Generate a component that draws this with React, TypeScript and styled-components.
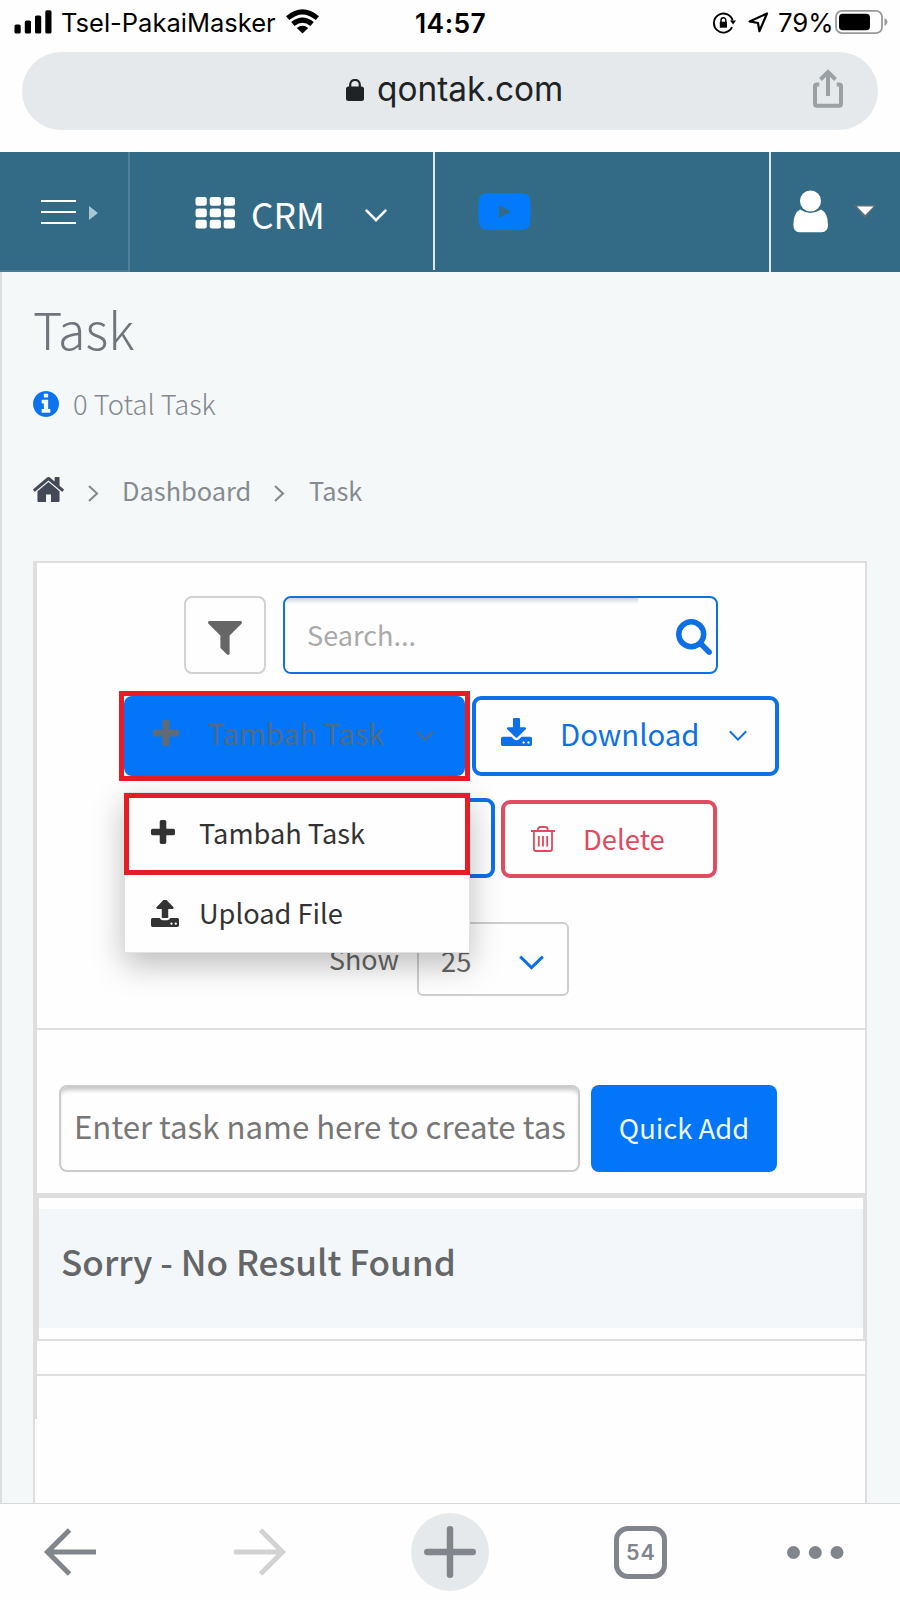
import React from "react";
import styled, { createGlobalStyle } from "styled-components";

const sans = '"Noto Sans CJK SC", "Open Sans", sans-serif';
const system = 'Inter, "Liberation Sans", sans-serif';
const blue = "#0275f8";
const outlineBlue = "#0e70e6";
const rule = "#dedede";
const red = "#e81c25";

const GlobalStyle = createGlobalStyle`
  * { box-sizing: border-box; }
  body { margin: 0; background: #fff; }
  svg { display: block; flex: none; }
  button, input { font: inherit; margin: 0; padding: 0; }
`;

const Screen = styled.div`
  width: 900px;
  height: 1600px;
  display: flex;
  flex-direction: column;
  overflow: hidden;
  background: #fefefe;
  font-family: ${sans};
`;

const Text = styled.span`
  display: block;
  line-height: 1;
  white-space: nowrap;
`;

/* ---------- status bar ---------- */
const StatusBar = styled.header`
  height: 52px;
  display: flex;
  align-items: flex-start;
  flex: none;
  color: #000;
  font-family: ${system};
`;
const SignalIcon = styled.svg`
  margin: 10px 0 0 14px;
`;
const Carrier = styled(Text)`
  width: 213px;
  margin: 10px 0 0 9px;
  font-size: 25.5px;
`;
const WifiIcon = styled.svg`
  margin: 9px 0 0 12px;
`;
const Clock = styled(Text)`
  width: 74px;
  margin: 10px 0 0 96px;
  font-size: 26.4px;
  font-weight: 600;
  letter-spacing: 0.45px;
`;
const LockRotateIcon = styled.svg`
  margin: 12px 0 0 224px;
`;
const LocationIcon = styled.svg`
  margin: 12px 0 0 12px;
`;
const BatteryText = styled(Text)`
  width: 55px;
  margin: 10px 0 0 9px;
  font-size: 25.8px;
`;
const BatteryIcon = styled.svg`
  margin: 9px 0 0 2px;
`;

/* ---------- address bar ---------- */
const AddressRow = styled.div`
  height: 100px;
  flex: none;
  padding: 0 22px;
`;
const AddressBar = styled.div`
  height: 78px;
  border-radius: 39px;
  background: #e5e9eb;
  display: flex;
  align-items: flex-start;
`;
const LockIcon = styled.svg`
  margin: 27px 0 0 324px;
`;
const Address = styled(Text)`
  width: 187px;
  margin: 21px 0 0 13px;
  color: #202326;
  font-family: ${system};
  font-size: 33.4px;
`;
const ShareIcon = styled.svg`
  margin: 17px 0 0 245px;
`;

/* ---------- navigation ---------- */
const Nav = styled.nav`
  height: 120px;
  flex: none;
  display: flex;
  background: #336b87;
  color: #fff;
`;
const NavToggle = styled.div`
  width: 130px;
  display: flex;
  align-items: flex-start;
  border-right: 2px solid #4f8198;
  border-bottom: 2px solid #4a7d94;
  padding: 48px 0 0 41px;
  gap: 12px;
`;
const ToggleArrow = styled.svg`
  margin-top: 6px;
`;
const NavProduct = styled.div`
  width: 305px;
  height: 118px;
  display: flex;
  align-items: flex-start;
  border-right: 2px solid #dbe7ec;
  padding-left: 65px;
`;
const GridIcon = styled.svg`
  margin-top: 45px;
`;
const ProductName = styled(Text)`
  width: 74px;
  margin: 44px 0 0 16px;
  font-size: 35.4px;
`;
const ProductChevron = styled.svg`
  margin: 57px 0 0 40px;
`;
const NavVideo = styled.div`
  width: 336px;
  border-right: 2px solid #dbe7ec;
  padding: 41px 0 0 43px;
`;
const NavAccount = styled.div`
  flex: 1;
  display: flex;
  align-items: flex-start;
  padding: 38px 0 0 22px;
`;
const AccountCaret = styled.svg`
  margin: 14px 0 0 24px;
`;

/* ---------- page heading ---------- */
const Page = styled.main`
  flex: 1;
  min-height: 0;
  border-left: 2px solid ${rule};
  background: #f4f8f9;
  padding-left: 31px;
  overflow: hidden;
`;
const PageHead = styled.div`
  height: 289px;
  display: flex;
  flex-direction: column;
  align-items: flex-start;
`;
const Title = styled.h1`
  margin: 31px 0 0;
  color: #6f757b;
  font-size: 50.2px;
  font-weight: 300;
  line-height: 1;
`;
const Summary = styled.div`
  display: flex;
  align-items: flex-start;
  margin-top: 37px;
`;
const InfoIcon = styled.svg`
  margin-top: 1px;
  color: #0c72ee;
`;
const SummaryText = styled(Text)`
  margin-left: 14px;
  color: #84898e;
  font-size: 27.3px;
  font-weight: 300;
`;
const Crumbs = styled.div`
  display: flex;
  align-items: flex-start;
  margin-top: 59px;
  color: #868b90;
  font-size: 25.4px;
`;
const HomeIcon = styled.svg`
  color: #444957;
`;
const CrumbArrow = styled.svg<{ $left: number }>`
  margin: 8px 0 0 ${(p) => p.$left}px;
`;
const Crumb = styled(Text)<{ $width: number; $left: number }>`
  width: ${(p) => p.$width}px;
  margin: 1px 0 0 ${(p) => p.$left}px;
`;

/* ---------- panel ---------- */
const Panel = styled.section`
  width: 834px;
  height: 960px;
  border: 2px solid ${rule};
  background: #fefefe;
`;
const PanelBody = styled.div`
  position: relative;
  height: 856px;
  border-left: 2px solid ${rule};
`;
const Toolbar = styled.div`
  height: 467px;
  padding-top: 33px;
  border-bottom: 2px solid ${rule};
`;
const SearchRow = styled.div`
  display: flex;
  gap: 17px;
  margin-left: 147px;
`;
const FilterButton = styled.button`
  width: 82px;
  height: 78px;
  display: flex;
  justify-content: center;
  padding-top: 23px;
  border: 2px solid #d2d2d2;
  border-radius: 8px;
  background: #fefefe;
  color: #666;
`;
const SearchBox = styled.div`
  width: 435px;
  height: 78px;
  display: flex;
  align-items: flex-start;
  overflow: hidden;
  border: 2px solid ${outlineBlue};
  border-radius: 8px;
`;
const SearchField = styled.div`
  width: 353px;
  height: 74px;
  padding: 23px 0 0 22px;
  border-top-left-radius: 6px;
  background: linear-gradient(#cfd4e0, #fefefe 6px);
  color: #aaa;
  font-size: 27.1px;
`;
const SearchIcon = styled.svg`
  margin: 21px 0 0 38px;
  color: ${outlineBlue};
`;
const ActionRow = styled.div`
  display: flex;
  align-items: flex-start;
  gap: 2px;
  margin: 17px 0 0 82px;
`;
const Highlight = styled.div`
  width: 351px;
  height: 90px;
  border: 5px solid ${red};
`;
const AddButton = styled.button`
  width: 341px;
  height: 80px;
  display: flex;
  align-items: flex-start;
  border: 0;
  border-radius: 8px;
  background: ${blue};
  color: #516b85;
  padding: 22px 0 0 29px;
  font-size: 28.9px;
`;
const AddIcon = styled.svg`
  margin-top: 2px;
  color: #5f6c78;
`;
const AddText = styled(Text)`
  width: 178px;
  margin: 0 0 0 28px;
`;
const AddChevron = styled.svg`
  margin: 12px 0 0 31px;
`;
const DownloadButton = styled.button`
  width: 307px;
  height: 80px;
  margin-top: 5px;
  display: flex;
  align-items: flex-start;
  border: 4px solid ${outlineBlue};
  border-radius: 9px;
  background: #fefefe;
  color: ${outlineBlue};
  padding: 18px 0 0 25px;
  font-size: 29.3px;
`;
const DownloadText = styled(Text)`
  width: 138px;
  margin: 1px 0 0 28px;
`;
const DownloadChevron = styled.svg`
  margin: 12px 0 0 31px;
`;
const BulkRow = styled.div`
  display: flex;
  align-items: flex-start;
  gap: 6px;
  margin: 17px 0 0 87px;
`;
const BulkButton = styled.button`
  width: 371px;
  height: 80px;
  border: 4px solid ${outlineBlue};
  border-radius: 9px;
  background: #fefefe;
`;
const DeleteButton = styled.button`
  width: 216px;
  height: 78px;
  margin-top: 2px;
  display: flex;
  align-items: flex-start;
  border: 4px solid #e04c60;
  border-radius: 9px;
  background: #fefefe;
  color: #de4a5e;
  padding: 20px 0 0 26px;
  font-size: 27.4px;
`;
const TrashIcon = styled.svg`
  margin-top: 2px;
`;
const DeleteText = styled(Text)`
  margin: 1px 0 0 28px;
`;
const PageSizeRow = styled.div`
  display: flex;
  align-items: flex-start;
  margin: 44px 0 0 292px;
  color: #666;
`;
const ShowText = styled(Text)`
  width: 71px;
  margin-top: 24px;
  font-size: 26.9px;
`;
const PageSize = styled.div`
  width: 152px;
  height: 74px;
  margin-left: 17px;
  display: flex;
  align-items: flex-start;
  border: 2px solid #cecece;
  border-radius: 6px;
  padding: 23px 0 0 22px;
  font-size: 27.3px;
`;
const SizeChevron = styled.svg`
  margin: 8px 0 0 48px;
  color: ${outlineBlue};
`;

const Menu = styled.div`
  position: absolute;
  left: 87px;
  top: 229px;
  width: 346px;
  height: 161px;
  border: 1px solid #e2e2e2;
  background: #fefefe;
  box-shadow: 0 12px 30px rgba(0, 0, 0, 0.26);
  color: #333;
`;
const MenuItem = styled.div<{ $marked?: boolean }>`
  width: 346px;
  height: ${(p) => (p.$marked ? 82 : 74)}px;
  margin-left: -1px;
  display: flex;
  align-items: flex-start;
  border: ${(p) => (p.$marked ? `5px solid ${red}` : "0")};
  padding: ${(p) => (p.$marked ? "20px 0 0 22px" : "23px 0 0 27px")};
  font-size: 27.2px;
`;
const MenuIcon = styled.svg`
  margin-top: 2px;
`;
const MenuText = styled(Text)<{ $left: number }>`
  margin: 1px 0 0 ${(p) => p.$left}px;
`;

const QuickAdd = styled.form`
  height: 163px;
  display: flex;
  align-items: flex-start;
  gap: 11px;
  padding: 55px 0 0 22px;
`;
const TaskInput = styled.input`
  width: 521px;
  height: 87px;
  padding: 0 6px 6px 13px;
  border: 2px solid #cbcbcb;
  border-radius: 8px;
  outline: 0;
  background: #fefefe;
  box-shadow: inset 0 5px 4px -2px #c4c4c4;
  font-size: 31.2px;
  &::placeholder { color: #777; opacity: 1; }
`;
const QuickButton = styled.button`
  width: 186px;
  height: 87px;
  padding-bottom: 3px;
  border: 0;
  border-radius: 8px;
  background: ${blue};
  color: #eff8ff;
  font-size: 27.4px;
`;
const Results = styled.div`
  height: 148px;
  margin-left: -1px;
  border-style: solid;
  border-color: ${rule};
  border-width: 5px 2px 2px 3px;
  padding: 11px 0;
`;
const EmptyMessage = styled.div`
  height: 119px;
  background: #f3f7fa;
  padding: 34px 0 0 22px;
  color: #646668;
  font-size: 35.1px;
  font-weight: 500;
`;
const TableFoot = styled.div`
  height: 35px;
  border-bottom: 2px solid ${rule};
`;

/* ---------- browser toolbar ---------- */
const BottomBar = styled.footer`
  height: 97px;
  flex: none;
  display: flex;
  align-items: center;
  border-top: 1px solid #d8d8d8;
  background: #fefefe;
  color: #80868b;
  padding: 0 0 0 43px;
`;
const ForwardIcon = styled.svg`
  margin-left: 138px;
  color: #d2d2d2;
`;
const NewTab = styled.div`
  width: 78px;
  height: 78px;
  margin-left: 124px;
  display: flex;
  align-items: center;
  justify-content: center;
  border-radius: 50%;
  background: #e6e9ec;
`;
const TabCount = styled.div`
  width: 53px;
  height: 53px;
  margin-left: 125px;
  display: flex;
  align-items: center;
  justify-content: center;
  border: 5px solid #80868b;
  border-radius: 14px;
  font: 600 21.5px/1 ${system};
  letter-spacing: 1px;
  padding: 1px 0 0 1px;
`;
const MoreIcon = styled.svg`
  margin-left: 120px;
`;

const plusPath =
  "M1600 736v192q0 40-28 68t-68 28h-416v416q0 40-28 68t-68 28h-192q-40 0-68-28t-28-68v-416h-416q-40 0-68-28t-28-68v-192q0-40 28-68t68-28h416v-416q0-40 28-68t68-28h192q40 0 68 28t28 68v416h416q40 0 68 28t28 68z";

export default function App() {
  return (
    <Screen>
      <GlobalStyle />
      <StatusBar>
        <SignalIcon width="38" height="24" viewBox="0 0 38 24">
          <rect x=".5" y="14.5" width="6.2" height="9" rx="1.6" />
          <rect x="10.8" y="10.5" width="6.2" height="13" rx="1.6" />
          <rect x="21" y="5.5" width="6.2" height="18" rx="1.6" />
          <rect x="31.3" y=".3" width="6.2" height="23.2" rx="1.6" />
        </SignalIcon>
        <Carrier>Tsel-PakaiMasker</Carrier>
        <WifiIcon width="33" height="25" viewBox="0 0 33 25">
          <path d="M0 7.2Q16.5-6.8 33 7.2L29.7 11Q16.5-.2 3.3 11Z" />
          <path d="M5.2 13.1Q16.5 3.8 27.8 13.1L24.4 16.9Q16.5 10.5 8.6 16.9Z" />
          <path d="M10.8 19Q16.5 14.3 22.2 19L16.5 24.6Z" />
        </WifiIcon>
        <Clock>14:57</Clock>
        <LockRotateIcon width="23" height="22" viewBox="0 0 23 22" fill="none" stroke="#000" strokeWidth="1.9">
          <path d="M19.6 8.5A9.5 9.5 0 1 0 19 15.2" />
          <path d="M17 8.5H23L20.1 12.6Z" fill="#000" stroke="none" />
          <path d="M6.8 9.7H14V15.7H6.8Z" fill="#000" stroke="none" />
          <path d="M8 10V8.1A2.4 2.4 0 0 1 12.8 8.1V10" strokeWidth="1.4" />
        </LockRotateIcon>
        <LocationIcon width="21" height="21" viewBox="0 0 21 21" fill="none" stroke="#000" strokeWidth="2.2" strokeLinejoin="round">
          <path d="M19 1.5 1.6 9.4 10 11 11.4 19.2Z" />
        </LocationIcon>
        <BatteryText>79%</BatteryText>
        <BatteryIcon width="53" height="26" viewBox="0 0 53 26">
          <rect x="1" y="1.8" width="46" height="22.4" rx="6" fill="none" stroke="#999" strokeWidth="1.8" />
          <rect x="4" y="4.8" width="31" height="16.4" rx="3.8" />
          <path d="M49.5 9Q52.5 10.3 52.5 13T49.5 17Z" fill="#999" />
        </BatteryIcon>
      </StatusBar>

      <AddressRow>
        <AddressBar>
          <LockIcon width="18" height="22" viewBox="0 0 18 22" fill="#202326">
            <rect y="7.5" width="18" height="14.5" rx="2.5" />
            <path d="M4.2 8V5.7A4.8 4.8 0 0 1 13.8 5.7V8" fill="none" stroke="#202326" strokeWidth="2.2" />
          </LockIcon>
          <Address>qontak.com</Address>
          <ShareIcon width="38" height="39" viewBox="-4 0 38 39" fill="none" stroke="#9ba0a4" strokeWidth="4">
            <path d="M6.3 15.6H4Q2 15.6 2 17.6V34.8Q2 36.8 4 36.8H26Q28 36.8 28 34.8V17.6Q28 15.6 26 15.6H23.7" />
            <path d="M15 27V3M7.5 10.5 15 3 22.5 10.5" />
          </ShareIcon>
        </AddressBar>
      </AddressRow>

      <Nav>
        <NavToggle>
          <svg width="35" height="25" viewBox="0 0 35 25" stroke="#fff" strokeWidth="2">
            <path d="M0 1H35M0 12H35M0 23H35" />
          </svg>
          <ToggleArrow width="10" height="14" viewBox="0 0 10 14">
            <path d="M1 0 10 7 1 14Z" fill="#a5c8d6" />
          </ToggleArrow>
        </NavToggle>
        <NavProduct>
          <GridIcon width="40" height="32" viewBox="0 0 40 32" fill="#fff">
            {[0, 11.5, 22.7].map((y) =>
              [0.5, 14.7, 28.7].map((x) => <rect key={`${x}-${y}`} x={x} y={y} width="11.3" height="8.8" rx="2.2" />)
            )}
          </GridIcon>
          <ProductName>CRM</ProductName>
          <ProductChevron width="22" height="14" viewBox="0 0 22 14" fill="none" stroke="#fff" strokeWidth="2.6" strokeLinecap="round">
            <path d="M1.6 1.6 11 11.2 20.4 1.6" />
          </ProductChevron>
        </NavProduct>
        <NavVideo>
          <svg width="53" height="37" viewBox="0 0 53 37">
            <path
              fillRule="evenodd"
              fill="#027afb"
              d="M7 .6Q26-.6 46 .6Q51 1 52 6Q53.4 18.5 52 31Q51 36 46 36.4Q26 37.6 7 36.4Q2 36 1 31Q-.4 18.5 1 6Q2 1 7 .6ZM21 12V25L33 18.5Z"
            />
          </svg>
        </NavVideo>
        <NavAccount>
          <svg width="36" height="43" viewBox="0 0 36 43" fill="#fff">
            <circle cx="17.5" cy="11" r="10.5" />
            <path d="M7 19.6Q17.5 26.5 28 19.6Q35 23 35 35Q35 42.2 28.5 42.2H6.5Q.4 42.2.4 35Q.4 23 7 19.6Z" />
          </svg>
          <AccountCaret width="24" height="16" viewBox="0 0 24 16">
            <path d="M1 1H23L12 14Z" fill="#6d7069" opacity=".75" />
            <path d="M4 2.5H20.5L12.2 11Z" fill="#fff" />
          </AccountCaret>
        </NavAccount>
      </Nav>

      <Page>
        <PageHead>
          <Title>Task</Title>
          <Summary>
            <InfoIcon width="26" height="26" viewBox="128 128 1536 1536" fill="currentColor">
              <path d="M1152 1376v-160q0-14-9-23t-23-9h-96v-512q0-14-9-23t-23-9h-320q-14 0-23 9t-9 23v160q0 14 9 23t23 9h96v320h-96q-14 0-23 9t-9 23v160q0 14 9 23t23 9h448q14 0 23-9t9-23zm-128-896v-160q0-14-9-23t-23-9h-192q-14 0-23 9t-9 23v160q0 14 9 23t23 9h192q14 0 23-9t9-23zm640 416q0 209-103 385.5t-279.5 279.5-385.5 103-385.5-103-279.5-279.5-103-385.5 103-385.5 279.5-279.5 385.5-103 385.5 103 279.5 279.5 103 385.5z" />
            </InfoIcon>
            <SummaryText>0 Total Task</SummaryText>
          </Summary>
          <Crumbs>
            <HomeIcon width="31" height="25" viewBox="88 250 1616 1286" preserveAspectRatio="none" fill="currentColor">
              <path d="M1472 992v480q0 26-19 45t-45 19h-384v-384h-256v384h-384q-26 0-45-19t-19-45v-480q0-1 .5-3t.5-3l575-474 575 474q1 2 1 6zm223-69l-62 74q-8 9-21 11h-3q-13 0-21-7l-692-577-692 577q-12 8-24 7-13-2-21-11l-62-74q-8-10-7-23.5t11-21.5l719-599q32-26 76-26t76 26l244 204v-195q0-14 9-23t23-9h192q14 0 23 9t9 23v408l219 182q10 8 11 21.5t-7 23.5z" />
            </HomeIcon>
            <CrumbArrow $left={24} width="11" height="17" viewBox="0 0 11 17" fill="none" stroke="#85898d" strokeWidth="2.1">
              <path d="M1 1 9 8.5 1 16" />
            </CrumbArrow>
            <Crumb $left={23} $width={129}>Dashboard</Crumb>
            <CrumbArrow $left={23} width="11" height="17" viewBox="0 0 11 17" fill="none" stroke="#85898d" strokeWidth="2.1">
              <path d="M1 1 9 8.5 1 16" />
            </CrumbArrow>
            <Crumb $left={24} $width={54}>Task</Crumb>
          </Crumbs>
        </PageHead>

        <Panel>
          <PanelBody>
            <Toolbar>
              <SearchRow>
                <FilterButton aria-label="Filter">
                  <svg width="34" height="34" viewBox="190 256 1412 1409" fill="currentColor">
                    <path d="M1595 295q17 41-14 70l-493 493v742q0 42-39 59-13 5-25 5-27 0-45-19l-256-256q-19-19-19-45v-486l-493-493q-31-29-14-70 17-39 59-39h1280q42 0 59 39z" />
                  </svg>
                </FilterButton>
                <SearchBox>
                  <SearchField>
                    <Text>Search...</Text>
                  </SearchField>
                  <SearchIcon width="36" height="36" viewBox="64 128 1664 1664" fill="currentColor">
                    <path d="M1216 832q0-185-131.5-316.5t-316.5-131.5-316.5 131.5-131.5 316.5 131.5 316.5 316.5 131.5 316.5-131.5 131.5-316.5zm512 832q0 52-38 90t-90 38q-54 0-90-38l-343-342q-179 124-399 124-143 0-273.5-55.5t-225-150-150-225-55.5-273.5 55.5-273.5 150-225 225-150 273.5-55.5 273.5 55.5 225 150 150 225 55.5 273.5q0 220-124 399l343 343q37 37 37 90z" />
                  </SearchIcon>
                </SearchBox>
              </SearchRow>

              <ActionRow>
                <Highlight>
                  <AddButton>
                    <AddIcon width="26" height="26" viewBox="192 128 1408 1408" fill="currentColor">
                      <path d={plusPath} />
                    </AddIcon>
                    <AddText>Tambah Task</AddText>
                    <AddChevron width="18" height="12" viewBox="0 0 18 12" fill="none" stroke="currentColor" strokeWidth="2">
                      <path d="M1 1.5 9 9.5 17 1.5" />
                    </AddChevron>
                  </AddButton>
                </Highlight>
                <DownloadButton>
                  <svg width="31" height="28" viewBox="64 0 1664 1536" preserveAspectRatio="none" fill="currentColor">
                    <path d="M1344 1344q0-26-19-45t-45-19-45 19-19 45 19 45 45 19 45-19 19-45zm256 0q0-26-19-45t-45-19-45 19-19 45 19 45 45 19 45-19 19-45zm128-224v320q0 40-28 68t-68 28h-1472q-40 0-68-28t-28-68v-320q0-40 28-68t68-28h465l135 136q58 56 136 56t136-56l136-136h464q40 0 68 28t28 68zm-325-569q17 41-14 70l-448 448q-18 19-45 19t-45-19l-448-448q-31-29-14-70 17-39 59-39h256v-448q0-26 19-45t45-19h256q26 0 45 19t19 45v448h256q42 0 59 39z" />
                  </svg>
                  <DownloadText>Download</DownloadText>
                  <DownloadChevron width="18" height="12" viewBox="0 0 18 12" fill="none" stroke="currentColor" strokeWidth="2">
                    <path d="M.8 1.2 9 9.6 17.2 1.2" />
                  </DownloadChevron>
                </DownloadButton>
              </ActionRow>

              <BulkRow>
                <BulkButton aria-label="Bulk actions" />
                <DeleteButton>
                  <TrashIcon width="24" height="26" viewBox="0 0 24 26" fill="none" stroke="currentColor" strokeWidth="1.8">
                    <path d="M0 5H24M2.9 5V23Q2.9 25 4.9 25H19Q21 25 21 23V5M7 5V3.5Q7 1 9.5 1H14Q16.7 1 16.7 3.5V5M7.8 10V20.5M12 10V20.5M16.2 10V20.5" />
                  </TrashIcon>
                  <DeleteText>Delete</DeleteText>
                </DeleteButton>
              </BulkRow>

              <PageSizeRow>
                <ShowText>Show</ShowText>
                <PageSize>
                  <Text>25</Text>
                  <SizeChevron width="25" height="16" viewBox="0 0 25 16" fill="none" stroke="currentColor" strokeWidth="3">
                    <path d="M1.2 1.6 12.5 12.6 23.8 1.6" />
                  </SizeChevron>
                </PageSize>
              </PageSizeRow>
            </Toolbar>

            <QuickAdd>
              <TaskInput placeholder="Enter task name here to create tas" />
              <QuickButton type="button">Quick Add</QuickButton>
            </QuickAdd>
            <Results>
              <EmptyMessage>
                <Text>Sorry - No Result Found</Text>
              </EmptyMessage>
            </Results>
            <TableFoot />

            <Menu>
              <MenuItem $marked>
                <MenuIcon width="24" height="24" viewBox="192 128 1408 1408" fill="currentColor">
                  <path d={plusPath} />
                </MenuIcon>
                <MenuText $left={24}>Tambah Task</MenuText>
              </MenuItem>
              <MenuItem>
                <MenuIcon width="28" height="27" viewBox="64 128 1664 1536" preserveAspectRatio="none" fill="currentColor">
                  <path d="M1344 1472q0-26-19-45t-45-19-45 19-19 45 19 45 45 19 45-19 19-45zm256 0q0-26-19-45t-45-19-45 19-19 45 19 45 45 19 45-19 19-45zm128-224v320q0 40-28 68t-68 28h-1472q-40 0-68-28t-28-68v-320q0-40 28-68t68-28h427q21 56 70.5 92t110.5 36h256q61 0 110.5-36t70.5-92h427q40 0 68 28t28 68zm-325-648q-17 40-59 40h-256v448q0 26-19 45t-45 19h-256q-26 0-45-19t-19-45v-448h-256q-42 0-59-40-17-39 14-69l448-448q18-19 45-19t45 19l448 448q31 30 14 69z" />
                </MenuIcon>
                <MenuText $left={20}>Upload File</MenuText>
              </MenuItem>
            </Menu>
          </PanelBody>
        </Panel>
      </Page>

      <BottomBar>
        <svg width="53" height="48" viewBox="0 0 53 48" fill="none" stroke="currentColor" strokeWidth="5">
          <path d="M53 24H5M26.5 2 4.5 24 26.5 46" />
        </svg>
        <ForwardIcon width="53" height="48" viewBox="0 0 53 48" fill="none" stroke="currentColor" strokeWidth="5">
          <path d="M0 24H48M26.5 2 48.5 24 26.5 46" />
        </ForwardIcon>
        <NewTab>
          <svg width="52" height="52" viewBox="0 0 52 52" stroke="currentColor" strokeWidth="6.5" strokeLinecap="round">
            <path d="M3.3 26H48.7M26 3.3V48.7" />
          </svg>
        </NewTab>
        <TabCount>54</TabCount>
        <MoreIcon width="57" height="13" viewBox="0 0 57 13" fill="currentColor">
          <circle cx="6.5" cy="6.5" r="6.5" />
          <circle cx="28.3" cy="6.5" r="6.5" />
          <circle cx="50" cy="6.5" r="6.5" />
        </MoreIcon>
      </BottomBar>
    </Screen>
  );
}
